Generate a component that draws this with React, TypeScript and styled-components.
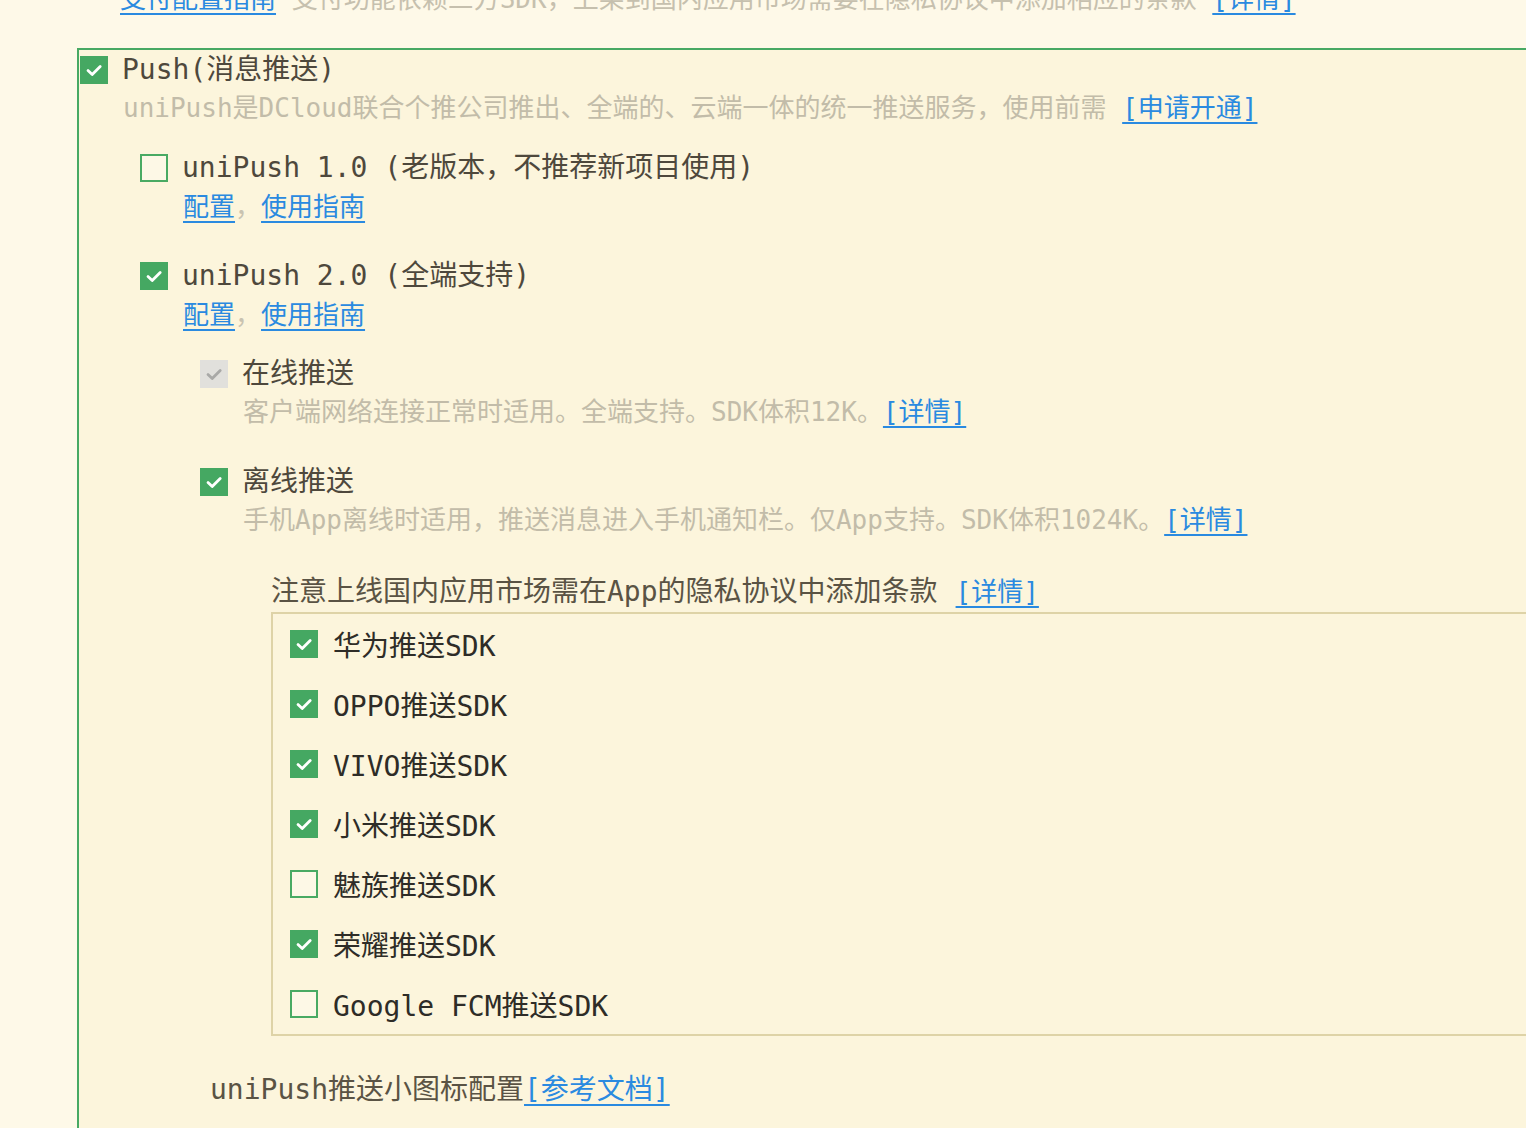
import React from 'react';
import styled, { createGlobalStyle, css } from 'styled-components';

type BoxState = 'on' | 'off' | 'disabled';

const GlobalStyle = createGlobalStyle`
  html, body {
    margin: 0;
    padding: 0;
    background: #fef9e8;
    overflow: hidden;
  }
  body {
    font-family: "DejaVu Sans Mono", "Noto Sans CJK SC", monospace;
  }
`;

const sdkList: { name: string; checked: boolean }[] = [
  { name: '华为推送SDK', checked: true },
  { name: 'OPPO推送SDK', checked: true },
  { name: 'VIVO推送SDK', checked: true },
  { name: '小米推送SDK', checked: true },
  { name: '魅族推送SDK', checked: false },
  { name: '荣耀推送SDK', checked: true },
  { name: 'Google FCM推送SDK', checked: false },
];

const Check = ({ state }: { state: BoxState }) => (
  <CheckBox $state={state}>
    {state !== 'off' && (
      <svg width="28" height="28" viewBox="0 0 28 28">
        <path
          d="M8 14.6 L12.2 18.6 L20.2 10.4"
          fill="none"
          stroke={state === 'disabled' ? '#a9a9a7' : '#ffffff'}
          strokeWidth="2.8"
          strokeLinecap="round"
          strokeLinejoin="round"
        />
      </svg>
    )}
  </CheckBox>
);

const App = () => {
  return (
    <>
      <GlobalStyle />
      <Page>
        <TopNote>
          <Link>支付配置指南</Link> 支付功能依赖三方SDK，上架到国内应用市场需要在隐私协议中添加相应的条款{' '}
          <Link>[详情]</Link>
        </TopNote>

        <Section>
          <Row>
            <Check state="on" />
            <Label>Push(消息推送)</Label>
          </Row>
          <Desc $indent={43}>
            uniPush是DCloud联合个推公司推出、全端的、云端一体的统一推送服务，使用前需 <Link>[申请开通]</Link>
          </Desc>

          <Group $indent={60}>
            <Row $top={22}>
              <Check state="off" />
              <Label>uniPush 1.0 (老版本，不推荐新项目使用)</Label>
            </Row>
            <Links>
              <Link>配置</Link>
              <Comma>，</Comma>
              <Link>使用指南</Link>
            </Links>

            <Row $top={30}>
              <Check state="on" />
              <Label>uniPush 2.0 (全端支持)</Label>
            </Row>
            <Links>
              <Link>配置</Link>
              <Comma>，</Comma>
              <Link>使用指南</Link>
            </Links>

            <Group $indent={60}>
              <Row $top={20}>
                <Check state="disabled" />
                <Label>在线推送</Label>
              </Row>
              <Desc $indent={43}>
                客户端网络连接正常时适用。全端支持。SDK体积12K。<Link>[详情]</Link>
              </Desc>

              <Row $top={32}>
                <Check state="on" />
                <Label>离线推送</Label>
              </Row>
              <Desc $indent={43}>
                手机App离线时适用，推送消息进入手机通知栏。仅App支持。SDK体积1024K。<Link>[详情]</Link>
              </Desc>

              <Vendors>
                <Notice>
                  注意上线国内应用市场需在App的隐私协议中添加条款
                  <NoticeLink>[详情]</NoticeLink>
                </Notice>
                <SdkBox>
                  {sdkList.map((sdk) => (
                    <SdkRow key={sdk.name}>
                      <Check state={sdk.checked ? 'on' : 'off'} />
                      <SdkLabel>{sdk.name}</SdkLabel>
                    </SdkRow>
                  ))}
                </SdkBox>
              </Vendors>
            </Group>
          </Group>

          <Footer>
            uniPush推送小图标配置<Link>[参考文档]</Link>
          </Footer>
        </Section>
      </Page>
    </>
  );
};

export default App;

const Page = styled.div`
  padding-left: 77px;
  min-height: 1128px;
`;

const TopNote = styled.div`
  margin-top: -19px;
  padding-left: 43px;
  font-size: 26px;
  line-height: 36px;
  color: #c6c0ae;
  white-space: nowrap;
`;

const Section = styled.div`
  margin-top: 31px;
  width: calc(100% + 40px);
  min-height: 1100px;
  box-sizing: border-box;
  border-top: 2px solid #48a963;
  border-left: 2px solid #48a963;
  background: #fcf5dc;
  padding-left: 1px;
`;

const Row = styled.div<{ $top?: number }>`
  display: flex;
  align-items: center;
  gap: 14px;
  height: 40px;
  margin-top: ${(p) => p.$top ?? 0}px;
`;

const CheckBox = styled.span<{ $state: BoxState }>`
  flex: none;
  display: flex;
  align-items: center;
  justify-content: center;
  width: 28px;
  height: 28px;
  box-sizing: border-box;
  ${(p) =>
    p.$state === 'on' &&
    css`
      background: #45a862;
    `}
  ${(p) =>
    p.$state === 'off' &&
    css`
      background: #fdf8e6;
      border: 2px solid #49aa63;
    `}
  ${(p) =>
    p.$state === 'disabled' &&
    css`
      background: #e1e0dc;
    `}
`;

const Label = styled.span`
  font-size: 28px;
  line-height: 40px;
  color: #4e483c;
  white-space: nowrap;
`;

const Desc = styled.div<{ $indent: number }>`
  padding-left: ${(p) => p.$indent}px;
  font-size: 26px;
  line-height: 36px;
  color: #c2bca9;
  white-space: nowrap;
`;

const Group = styled.div<{ $indent: number }>`
  padding-left: ${(p) => p.$indent}px;
`;

const Links = styled.div`
  padding-left: 43px;
  font-size: 26px;
  line-height: 38px;
`;

const Link = styled.a`
  color: #2a8ae0;
  text-decoration: underline;
  text-decoration-thickness: 2px;
  text-underline-offset: 5px;
  cursor: pointer;
`;

const NoticeLink = styled(Link)`
  margin-left: 18px;
  font-size: 26px;
`;

const Comma = styled.span`
  color: #c9c3b1;
`;

const Vendors = styled.div`
  margin-top: 36px;
  padding-left: 71px;
`;

const Notice = styled.div`
  font-size: 28px;
  line-height: 36px;
  color: #5a5344;
  white-space: nowrap;
`;

const SdkBox = styled.div`
  margin-top: 2px;
  width: calc(100% + 40px);
  box-sizing: border-box;
  border: 2px solid #ded3a7;
  padding-left: 17px;
`;

const SdkRow = styled.div`
  display: flex;
  align-items: center;
  gap: 15px;
  height: 60px;
`;

const SdkLabel = styled.span`
  font-size: 28px;
  color: #2e2c27;
  white-space: nowrap;
`;

const Footer = styled.div`
  margin-top: 34px;
  padding-left: 130px;
  font-size: 28px;
  line-height: 40px;
  color: #5a5344;
  white-space: nowrap;
`;
